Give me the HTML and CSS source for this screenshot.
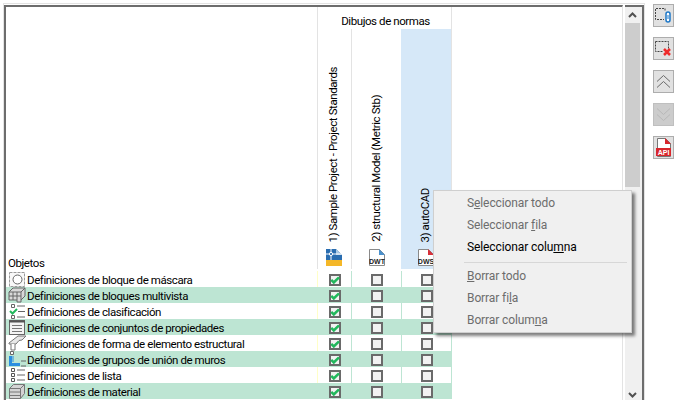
FILE: index.html
```html
<!DOCTYPE html>
<html lang="es">
<head>
    <meta charset="UTF-8">
    <title>Dibujos de normas</title>
    <link rel="stylesheet" href="styles.css">
</head>
<body>
    <svg class="defs" width="0" height="0">
        <symbol id="tick" viewBox="0 0 12 12">
            <path d="M2.200 5.800 4.800 8.400 10 3.400" fill="none" stroke="#21b85c" stroke-width="2.600"/>
        </symbol>
    </svg>

    <div class="window">
        <div class="frame">
            <div class="list">
                <div class="grid top-row">
                    <div></div>
                    <div class="group-title">Dibujos de normas</div>
                </div>

                <div class="grid head-row">
                    <div class="objects-title">Objetos</div>
                    <div class="col-head first">
                        <span class="col-label">1) Sample Project - Project Standards</span>
                        <svg class="file-icon" width="16" height="17" viewBox="0 0 16 17">
                            <path d="M0 0h10l6 6v5H0z" fill="#2a6db0"/>
                            <path d="M10 0l6 6h-6z" fill="#a8c8e4"/>
                            <path d="M0 11h16v6H0z" fill="#f4b728"/>
                            <path d="M5 0v11M0 5h16" stroke="#fff" stroke-width="1"/>
                            <circle cx="5" cy="5" r="1.600" fill="#2a6db0" stroke="#fff"/>
                        </svg>
                    </div>
                    <div class="col-head">
                        <span class="col-label">2) structural Model (Metric Stb)</span>
                        <svg class="file-icon" width="16" height="17" viewBox="0 0 16 17">
                            <path d="M.5.5h10l5 5v11H.5z" fill="#fff" stroke="#8a8a8a"/>
                            <path d="M10 0l6 6h-6z" fill="#4a90cc"/>
                            <text class="file-tag" x="8" y="14.500">DWT</text>
                        </svg>
                    </div>
                    <div class="col-head selected">
                        <span class="col-label">3) autoCAD</span>
                        <svg class="file-icon" width="16" height="17" viewBox="0 0 16 17">
                            <path d="M.5.5h10l5 5v11H.5z" fill="#fff" stroke="#8a8a8a"/>
                            <path d="M10 0l6 6h-6z" fill="#d8303a"/>
                            <text class="file-tag" x="8" y="14.500">DWS</text>
                        </svg>
                    </div>
                </div>

                <div class="head-gap"></div>

                <div class="grid row">
                    <div class="name">
                        <svg class="row-icon" width="18" height="16" viewBox="0 0 18 16">
                            <rect x="1.500" y="1.500" width="15" height="14" fill="#f8f8f8" stroke="#9a9a9a" stroke-dasharray="3 1"/>
                            <circle cx="9.500" cy="8.500" r="4.500" fill="#fff" stroke="#666"/>
                        </svg>
                        Definiciones de bloque de máscara
                    </div>
                    <div class="cell"><span class="box"><svg width="12" height="12"><use href="#tick"/></svg></span></div>
                    <div class="cell"><span class="box"></span></div>
                    <div class="cell"><span class="box"></span></div>
                </div>
                <div class="grid row even">
                    <div class="name">
                        <svg class="row-icon" width="18" height="16" viewBox="0 0 18 16">
                            <path d="M1 5l4-4h12v8l-4 4v2H9v-2H1z" fill="#d8d8d8" stroke="#666"/>
                            <path d="M1 5h12v8M13 5l4-4M5 5v8M9 5v8M1 9h12" fill="none" stroke="#666"/>
                        </svg>
                        Definiciones de bloques multivista
                    </div>
                    <div class="cell"><span class="box"><svg width="12" height="12"><use href="#tick"/></svg></span></div>
                    <div class="cell"><span class="box"></span></div>
                    <div class="cell"><span class="box"></span></div>
                </div>
                <div class="grid row">
                    <div class="name">
                        <svg class="row-icon" width="18" height="16" viewBox="0 0 18 16">
                            <path d="M3.500 1.500h3v3h-3zM3.500 12.500h3v3h-3z" fill="#fff" stroke="#666"/>
                            <path d="M2 8l2.500 2.500L9 6" fill="none" stroke="#21b85c" stroke-width="2"/>
                            <path d="M9 3h8M10 8.500h7M9 14h8" stroke="#666"/>
                        </svg>
                        Definiciones de clasificación
                    </div>
                    <div class="cell"><span class="box"><svg width="12" height="12"><use href="#tick"/></svg></span></div>
                    <div class="cell"><span class="box"></span></div>
                    <div class="cell"><span class="box"></span></div>
                </div>
                <div class="grid row even">
                    <div class="name">
                        <svg class="row-icon" width="18" height="16" viewBox="0 0 18 16">
                            <rect x="1.500" y="1.500" width="15" height="14" fill="#f4f4f4" stroke="#666"/>
                            <path d="M1 2.500h16" stroke="#555" stroke-width="2"/>
                            <path d="M4 6.500h10M4 9.500h10M4 12.500h10" stroke="#777"/>
                        </svg>
                        Definiciones de conjuntos de propiedades
                    </div>
                    <div class="cell"><span class="box"><svg width="12" height="12"><use href="#tick"/></svg></span></div>
                    <div class="cell"><span class="box"></span></div>
                    <div class="cell"><span class="box"></span></div>
                </div>
                <div class="grid row">
                    <div class="name">
                        <svg class="row-icon" width="18" height="16" viewBox="0 0 18 16">
                            <path d="M1 8l9-7h8l-4 4-3 .5-3 3.500H1z" fill="#e8e8e8" stroke="#777"/>
                            <path d="M3 9v6h4V9" fill="#fff" stroke="#777"/>
                        </svg>
                        Definiciones de forma de elemento estructural
                    </div>
                    <div class="cell"><span class="box"><svg width="12" height="12"><use href="#tick"/></svg></span></div>
                    <div class="cell"><span class="box"></span></div>
                    <div class="cell"><span class="box"></span></div>
                </div>
                <div class="grid row even">
                    <div class="name">
                        <svg class="row-icon" width="18" height="16" viewBox="0 0 18 16">
                            <path d="M2.500.5h3v3h-3z" fill="#fff" stroke="#666"/>
                            <path d="M1 5h3v7h8v3H1z" fill="#2b8fe0"/>
                            <path d="M5 5v6" stroke="#2b8fe0"/>
                            <path d="M13 10h5M13 15h5" stroke="#666"/>
                        </svg>
                        Definiciones de grupos de unión de muros
                    </div>
                    <div class="cell"><span class="box"><svg width="12" height="12"><use href="#tick"/></svg></span></div>
                    <div class="cell"><span class="box"></span></div>
                    <div class="cell"><span class="box"></span></div>
                </div>
                <div class="grid row">
                    <div class="name">
                        <svg class="row-icon" width="18" height="16" viewBox="0 0 18 16">
                            <path d="M3.500 1.500h3v3h-3zM3.500 6.500h3v3h-3zM3.500 11.500h3v3h-3z" fill="#fff" stroke="#555"/>
                            <path d="M9 3h8M9 8h8M9 13h8" stroke="#666"/>
                        </svg>
                        Definiciones de lista
                    </div>
                    <div class="cell"><span class="box"><svg width="12" height="12"><use href="#tick"/></svg></span></div>
                    <div class="cell"><span class="box"></span></div>
                    <div class="cell"><span class="box"></span></div>
                </div>
                <div class="grid row even">
                    <div class="name">
                        <svg class="row-icon" width="18" height="16" viewBox="0 0 18 16">
                            <path d="M1.500 5.500l4-4h11v9l-4 5h-11z" fill="#d4d4d4" stroke="#777"/>
                            <path d="M1.500 5.500h11v10M12.500 5.500l4-4M1.500 9h11M1.500 12.500h11" fill="none" stroke="#777"/>
                        </svg>
                        Definiciones de material
                    </div>
                    <div class="cell"><span class="box"><svg width="12" height="12"><use href="#tick"/></svg></span></div>
                    <div class="cell"><span class="box"></span></div>
                    <div class="cell"><span class="box"></span></div>
                </div>
            </div>

            <div class="scrollbar">
                <div class="scroll-arrow">
                    <svg width="9" height="6" viewBox="0 0 9 6"><path d="M1 5l3.500-3.500L8 5" fill="none" stroke="#505050" stroke-width="2"/></svg>
                </div>
                <div class="scroll-thumb"></div>
                <div class="scroll-track"></div>
                <div class="scroll-arrow">
                    <svg width="9" height="6" viewBox="0 0 9 6"><path d="M1 1l3.500 3.500L8 1" fill="none" stroke="#505050" stroke-width="2"/></svg>
                </div>
            </div>
        </div>

        <div class="toolbar">
            <button class="tool">
                <svg width="17" height="17" viewBox="0 0 17 17">
                    <path d="M10 3.500V1.500H.5v11H9" fill="none" stroke="#444" stroke-dasharray="2 1"/>
                    <rect x="11" y="5" width="4" height="10" rx="2" fill="#fff" stroke="#1e78c8" stroke-width="1.500"/>
                    <path d="M13 8v4" stroke="#1e78c8"/>
                </svg>
            </button>
            <button class="tool">
                <svg width="17" height="17" viewBox="0 0 17 17">
                    <path d="M.5 1.500h13v8M.5 1.500v10h7" fill="none" stroke="#444" stroke-dasharray="2 1"/>
                    <path d="M9 9l6 6M15 9l-6 6" stroke="#ee2b2b" stroke-width="2.500"/>
                </svg>
            </button>
            <button class="tool">
                <svg width="15" height="15" viewBox="0 0 15 15">
                    <path d="M1 7.500l6.500-6 6.500 6M1 13.500l6.500-6 6.500 6" fill="none" stroke="#6a6a6a"/>
                </svg>
            </button>
            <button class="tool off">
                <svg width="15" height="15" viewBox="0 0 15 15">
                    <path d="M1 1.500l6.500 6 6.500-6M1 7.500l6.500 6 6.500-6" fill="none" stroke="#b8b8b8"/>
                </svg>
            </button>
            <button class="tool">
                <svg width="17" height="19" viewBox="0 0 17 19">
                    <path d="M2.500.5h8l5 5v13h-13z" fill="#fff" stroke="#777"/>
                    <path d="M10 0l6 6h-6z" fill="#d8262c"/>
                    <rect x="1" y="10" width="15" height="8" fill="#d8262c"/>
                    <text class="pdf-tag" x="8.500" y="16.500">API</text>
                </svg>
            </button>
        </div>
    </div>

    <div class="menu">
        <div class="menu-item off">S<u>e</u>leccionar todo</div>
        <div class="menu-item off">Seleccionar <u>f</u>ila</div>
        <div class="menu-item">Seleccionar colu<u>m</u>na</div>
        <div class="menu-sep"></div>
        <div class="menu-item off"><u>B</u>orrar todo</div>
        <div class="menu-item off">Borrar fi<u>l</u>a</div>
        <div class="menu-item off">Borrar colum<u>n</u>a</div>
    </div>
</body>
</html>
```

FILE: styles.css
```css
html, body {
    margin: 0;
    height: 400px;
    overflow: hidden;
    background: #fff;
}

body {
    font-family: Roboto, "Liberation Sans", sans-serif;
    font-size: 11.5px;
    letter-spacing: -0.42px;
    color: #000;
}

.defs {
    display: block;
}

.window {
    display: flex;
    align-items: flex-start;
    height: 400px;
    padding: 3px 0 0 3px;
    box-sizing: border-box;
}

.frame {
    display: flex;
    width: 642px;
    height: 397px;
    box-sizing: border-box;
    border: 1px solid #e3e3e3;
    border-bottom: none;
}

.list {
    width: 616px;
    margin: 1px 2px 0 0;
    padding-left: 2px;
    border-top: 2px solid #6d6d6d;
    border-right: 1px solid #e3e3e3;
    background: linear-gradient(#6d6d6d, #6d6d6d) 0 0 / 2px 100% no-repeat;
    overflow: hidden;
}

/* shared columns of header and rows */
.grid {
    display: grid;
    grid-template-columns: 311px 34px 50px 51px;
    width: 446px;
}

.top-row {
    height: 22px;
}

.group-title {
    grid-column: 2 / 5;
    padding-left: 2px;
    border-left: 1px solid #e3e3e3;
    border-right: 1px solid #e3e3e3;
    text-align: center;
    line-height: 28px;
}

.head-row {
    height: 240px;
}

.objects-title {
    align-self: end;
    margin-bottom: -2px;
    padding-left: 2px;
    line-height: 16px;
}

.col-head {
    display: flex;
    flex-direction: column;
    align-items: center;
    justify-content: flex-end;
    gap: 7px;
    padding-bottom: 3px;
    box-sizing: border-box;
    border-left: 1px solid #e3e3e3;
}

.col-head.first {
    padding-right: 2px;
}

.col-head.selected {
    background: #d6e8f8;
    border-right: 1px solid #e3e3e3;
    border-left: none;
    padding-right: 1px;
}

.col-label {
    writing-mode: vertical-rl;
    transform: rotate(180deg);
    white-space: nowrap;
    line-height: 16px;
    margin-right: 1px;
}

.file-icon {
    display: block;
    flex: none;
}

.file-tag {
    font-family: "Liberation Sans", sans-serif;
    font-size: 7px;
    font-weight: bold;
    letter-spacing: 0;
    text-anchor: middle;
    fill: #222;
}

.pdf-tag {
    font-family: "Liberation Sans", sans-serif;
    font-size: 7px;
    font-weight: bold;
    letter-spacing: 0;
    text-anchor: middle;
    fill: #fff;
}

.head-gap {
    height: 2px;
}

.row {
    height: 16px;
}

.row.even {
    background: #bde5d3;
}

.name {
    display: flex;
    align-items: center;
    padding: 2px 0 0 2px;
    box-sizing: border-box;
    height: 16px;
    white-space: nowrap;
    line-height: 14px;
}

.row-icon {
    flex: none;
    margin: -2px 1px 0 0;
}

.cell {
    display: flex;
    justify-content: center;
    padding: 3px 0 0 1px;
    box-sizing: border-box;
    border-left: 1px solid #bde5d3;
}

.cell:nth-child(2) {
    border-left-color: #ffffc8;
}

.row.even .cell:nth-child(2) {
    border-left-color: #bde5d3;
}

.cell:last-child {
    border-right: 1px solid #bde5d3;
}

.box {
    display: block;
    width: 12px;
    height: 12px;
    box-sizing: border-box;
    border: 2px solid #6a6a6a;
    background: #f2f2f2;
}

.box svg {
    display: block;
    margin: -2px;
}

.scrollbar {
    display: flex;
    flex-direction: column;
    width: 17px;
    height: 396px;
    margin-top: 1px;
    border-top: 2px solid #6d6d6d;
    border-right: 2px solid #6d6d6d;
    background: #f0f0f0;
}

.scroll-arrow {
    display: flex;
    align-items: center;
    justify-content: center;
    width: 15px;
    height: 16px;
    flex: none;
}

.scroll-thumb {
    width: 15px;
    height: 164px;
    flex: none;
    background: #cdcdcd;
}

.scroll-track {
    flex: 1;
}

.toolbar {
    display: flex;
    flex-direction: column;
    gap: 10px;
    margin: 1px 0 0 8px;
}

.tool {
    display: flex;
    align-items: center;
    justify-content: center;
    width: 21px;
    height: 23px;
    padding: 0;
    border: 1px solid #adadad;
    background: #e1e1e1;
}

.tool.off {
    background: #cccccc;
    border-color: #bfbfbf;
}

/* context menu over the table */
.menu {
    position: absolute;
    left: 433px;
    top: 190px;
    width: 199px;
    height: 143px;
    box-sizing: border-box;
    padding: 1px 2px;
    font-size: 12px;
    letter-spacing: -0.1px;
    background: #f0f0f0;
    border: 1px solid #cfcfcf;
    box-shadow: 3px 3px 3px rgba(0, 0, 0, 0.5);
}

.menu-item {
    height: 22px;
    padding-left: 31px;
    line-height: 22px;
    white-space: nowrap;
}

.menu-item.off {
    color: #6d6d6d;
}

.menu-sep {
    height: 1px;
    margin: 4px 2px 2px 28px;
    background: #d7d7d7;
}
```
